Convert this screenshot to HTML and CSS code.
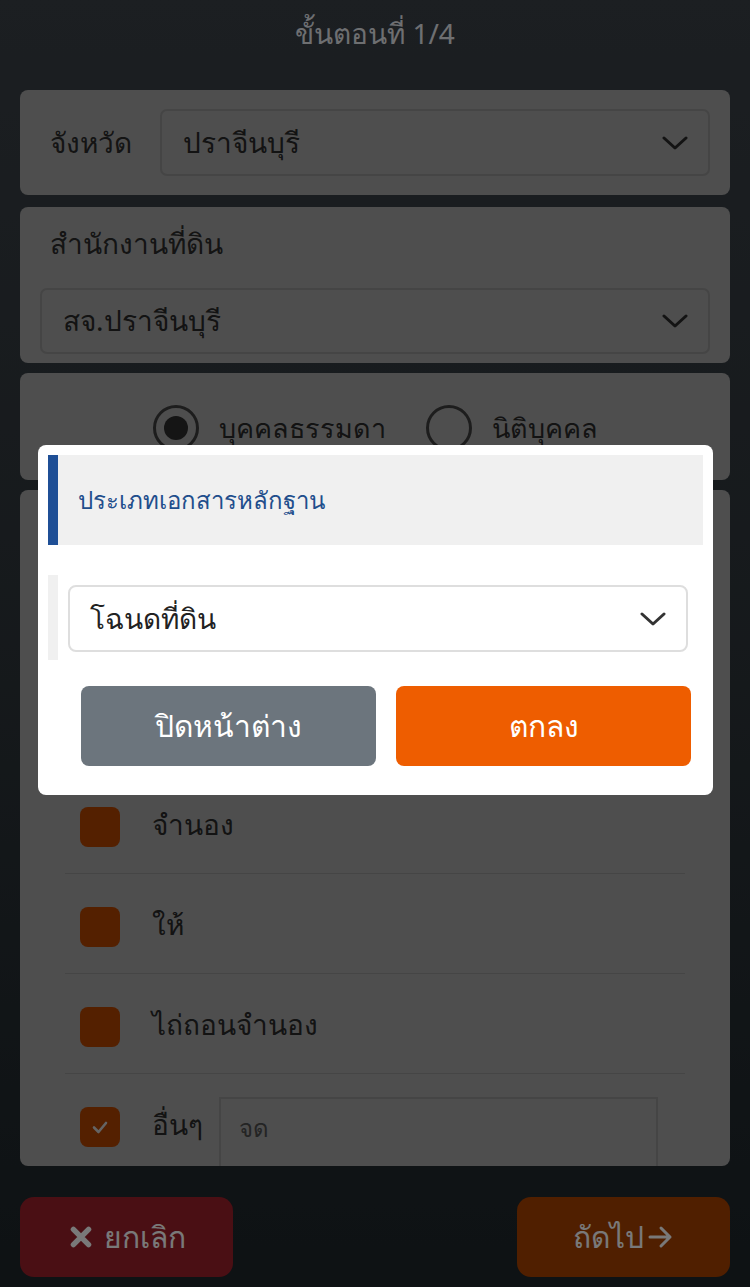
FILE: index.html
```html
<!DOCTYPE html>
<html lang="th">
<head>
<meta charset="utf-8">
<link rel="stylesheet" href="styles.css">
</head>
<body>
<div class="page">
  <h1 class="step">ขั้นตอนที่ 1/4</h1>

  <section class="card card-province">
    <span class="field-label">จังหวัด</span>
    <div class="select select-dark grow">
      <span>ปราจีนบุรี</span>
      <svg class="chev" viewBox="0 0 26 14" width="26" height="14"><path d="M2 2 L13 12 L24 2" fill="none" stroke="currentColor" stroke-width="3" stroke-linecap="round" stroke-linejoin="round"/></svg>
    </div>
  </section>

  <section class="card card-office">
    <span class="field-label office-label">สำนักงานที่ดิน</span>
    <div class="select select-dark">
      <span>สจ.ปราจีนบุรี</span>
      <svg class="chev" viewBox="0 0 26 14" width="26" height="14"><path d="M2 2 L13 12 L24 2" fill="none" stroke="currentColor" stroke-width="3" stroke-linecap="round" stroke-linejoin="round"/></svg>
    </div>
  </section>

  <section class="card card-radios">
    <label class="radio"><span class="radio-dot checked"></span><span>บุคคลธรรมดา</span></label>
    <label class="radio"><span class="radio-dot"></span><span>นิติบุคคล</span></label>
  </section>

  <section class="card card-list">
    <div class="row"><span class="cb"></span><span class="row-label">จำนอง</span></div>
    <div class="row"><span class="cb"></span><span class="row-label">ให้</span></div>
    <div class="row"><span class="cb"></span><span class="row-label">ไถ่ถอนจำนอง</span></div>
    <div class="row row-last">
      <span class="cb cb-on"><svg viewBox="0 0 20 20" width="20" height="20"><path d="M4 10.5 L8.5 15 L16 6" fill="none" stroke="currentColor" stroke-width="2.6" stroke-linecap="round" stroke-linejoin="round"/></svg></span>
      <span class="row-label">อื่นๆ</span>
      <div class="other-input">จด</div>
    </div>
  </section>

  <div class="actions">
    <button class="btn btn-cancel"><svg viewBox="0 0 24 24" width="26" height="26"><path d="M5 5 L19 19 M19 5 L5 19" fill="none" stroke="currentColor" stroke-width="5" stroke-linecap="round"/></svg><span>ยกเลิก</span></button>
    <button class="btn btn-next"><span>ถัดไป</span><svg viewBox="0 0 26 24" width="26" height="24"><path d="M2 12 H22 M13 3 L22 12 L13 21" fill="none" stroke="currentColor" stroke-width="3" stroke-linecap="round" stroke-linejoin="round"/></svg></button>
  </div>
</div>

<div class="backdrop"></div>

<div class="modal">
  <div class="modal-head">ประเภทเอกสารหลักฐาน</div>
  <div class="modal-body">
    <div class="select select-light">
      <span>โฉนดที่ดิน</span>
      <svg class="chev" viewBox="0 0 26 14" width="26" height="14"><path d="M2 2 L13 12 L24 2" fill="none" stroke="currentColor" stroke-width="3" stroke-linecap="round" stroke-linejoin="round"/></svg>
    </div>
  </div>
  <div class="modal-actions">
    <button class="mbtn mbtn-close">ปิดหน้าต่าง</button>
    <button class="mbtn mbtn-ok">ตกลง</button>
  </div>
</div>
</body>
</html>
```

FILE: styles.css
```css
* { box-sizing: border-box; }

html, body {
  margin: 0;
  width: 750px;
  height: 1287px;
  overflow: hidden;
}

body {
  font-family: "Noto Sans", "DejaVu Sans", sans-serif;
  background: linear-gradient(180deg, #383e44 0%, #2c3338 50%, #1c2428 100%);
  color: #282828;
}

.page {
  display: flex;
  flex-direction: column;
  padding: 0 20px;
  height: 1287px;
}

.step {
  margin: 0 0 20px;
  height: 70px;
  line-height: 66px;
  text-align: center;
  font-size: 28px;
  font-weight: normal;
  color: #dcdfe2;
}

.card {
  background: #9c9c9c;
  border-radius: 8px;
}

.field-label {
  font-size: 28px;
  color: #282828;
}

.select {
  display: flex;
  align-items: center;
  justify-content: space-between;
  height: 67px;
  border-radius: 7px;
  font-size: 28px;
}

.select-dark {
  border: 2px solid #8a8a8a;
  padding: 0 20px 0 21px;
  color: #262626;
}

.grow { flex: 1; }

.chev { flex: none; }

.card-province {
  display: flex;
  align-items: center;
  height: 105px;
  padding: 0 20px 0 30px;
  margin-bottom: 12px;
}

.card-province .field-label { width: 110px; }

.card-office {
  display: flex;
  flex-direction: column;
  height: 156px;
  padding: 14px 20px 9px;
  margin-bottom: 10px;
}

.office-label {
  line-height: 44px;
  padding-left: 10px;
  margin-bottom: 23px;
}

.card-radios {
  display: flex;
  align-items: center;
  justify-content: center;
  gap: 40px;
  height: 107px;
  padding-top: 3px;
  margin-bottom: 10px;
}

.radio {
  display: flex;
  align-items: center;
  gap: 20px;
  font-size: 27px;
  color: #262626;
}

.radio-dot {
  width: 46px;
  height: 46px;
  border: 3px solid #3a3a3a;
  border-radius: 50%;
  display: flex;
  align-items: center;
  justify-content: center;
}

.radio-dot.checked::after {
  content: "";
  width: 24px;
  height: 24px;
  border-radius: 50%;
  background: #2a2a2a;
}

.card-list {
  height: 676px;
  overflow: hidden;
  padding: 284px 45px 0;
}

.row {
  display: flex;
  align-items: flex-start;
  padding: 33px 0 26px 15px;
  border-bottom: 1px solid #8a8a8a;
  height: 100px;
}

.row-last { border-bottom: none; }

.cb {
  flex: none;
  width: 40px;
  height: 40px;
  border-radius: 8px;
  background: #a84000;
  display: flex;
  align-items: center;
  justify-content: center;
  color: #c8c8c8;
}

.row-label {
  margin-left: 32px;
  font-size: 28px;
  line-height: 34px;
  color: #262626;
}

.other-input {
  margin-left: 16px;
  margin-top: -10px;
  width: 439px;
  height: 80px;
  border: 2px solid #8a8a8a;
  padding: 10px 18px;
  font-size: 24px;
  color: #484848;
}

.actions {
  display: flex;
  justify-content: space-between;
  margin-top: 31px;
}

.btn {
  display: flex;
  align-items: center;
  justify-content: center;
  gap: 10px;
  width: 213px;
  height: 80px;
  border: none;
  border-radius: 14px;
  font-family: inherit;
  font-size: 30px;
  color: #f2f2f2;
}

.btn-cancel { background: #941e28; }
.btn-next { background: #a03e00; gap: 4px; }

.backdrop {
  position: fixed;
  inset: 0;
  background: rgba(0, 0, 0, 0.5);
}

.modal {
  position: fixed;
  left: 38px;
  top: 445px;
  width: 675px;
  height: 350px;
  background: #fff;
  border-radius: 8px;
  padding: 10px;
}

.modal-head {
  height: 90px;
  display: flex;
  align-items: center;
  background: #f0f0f0;
  border-left: 10px solid #1f4f96;
  padding-left: 20px;
  font-size: 24px;
  color: #1f4e8c;
}

.modal-body {
  margin-top: 30px;
  border-left: 10px solid #f0f0f0;
  padding: 10px 15px 8px 10px;
}

.select-light {
  border: 2px solid #dedede;
  border-radius: 8px;
  padding: 0 20px 0 20px;
  color: #222;
}

.select-light .chev { color: #333; }

.modal-actions {
  display: flex;
  gap: 20px;
  margin-top: 26px;
  padding-left: 33px;
}

.mbtn {
  width: 295px;
  height: 80px;
  border: none;
  border-radius: 8px;
  font-family: inherit;
  font-size: 30px;
  color: #fff;
}

.mbtn-close { background: #6c757d; }
.mbtn-ok { background: #ee5d00; }
```
